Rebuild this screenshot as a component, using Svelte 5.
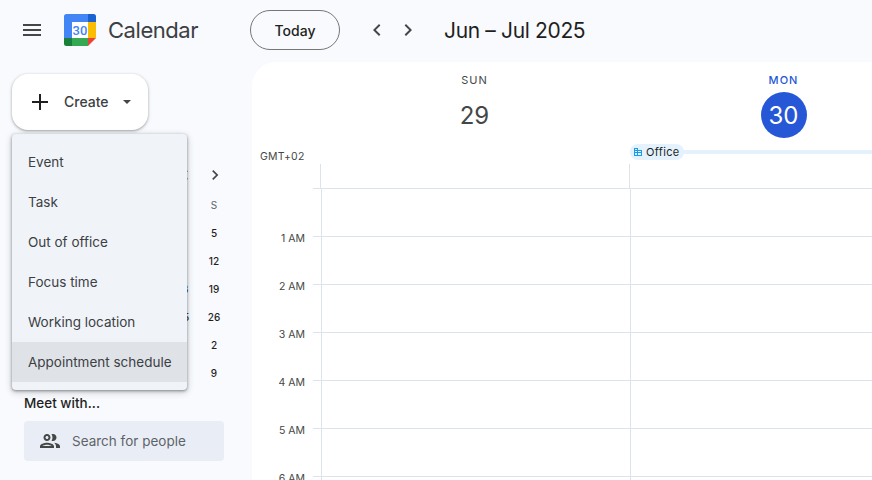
<script lang="ts">
  const menuItems = ['Event', 'Task', 'Out of office', 'Focus time', 'Working location', 'Appointment schedule'];
  const hours = ['1 AM', '2 AM', '3 AM', '4 AM', '5 AM', '6 AM'];
  const miniRows = [
    { mid: '', right: 'S', head: true },
    { mid: '', right: '5' },
    { mid: '', right: '12' },
    { mid: '18', right: '19' },
    { mid: '25', right: '26' },
    { mid: '', right: '2' },
    { mid: '', right: '9' }
  ];
</script>

<div class="page">
  <header class="topbar">
    <div class="brand">
      <button class="burger" aria-label="Main menu">
        <svg width="24" height="24" viewBox="0 0 24 24"><path fill="#444746" d="M3 18h18v-2H3v2zm0-5h18v-2H3v2zm0-7v2h18V6H3z"/></svg>
      </button>
      <svg class="logo" width="32" height="32" viewBox="0 0 32 32">
        <path fill="#4285f4" d="M2.500 0H24v8H8v16H0V2.500A2.500 2.500 0 0 1 2.500 0z"/>
        <path fill="#1a62d2" d="M24 0h5.500A2.500 2.500 0 0 1 32 2.500V8h-8z"/>
        <path fill="#fbbc04" d="M24 8h8v16h-8z"/>
        <path fill="#34a853" d="M8 24h16v8H8z"/>
        <path fill="#188038" d="M0 24h8v8H2.500A2.500 2.500 0 0 1 0 29.500z"/>
        <path fill="#ea4335" d="M24 24h8l-8 8z"/>
        <path fill="#fff" d="M8 8h16v16H8z"/>
        <text x="16" y="20.500" text-anchor="middle" class="logo-num">30</text>
      </svg>
      <span class="app-name">Calendar</span>
    </div>
    <button class="today">Today</button>
    <div class="nav-arrows">
      <svg width="24" height="24" viewBox="0 0 24 24"><path fill="#444746" d="M15.400 7.400 14 6l-6 6 6 6 1.400-1.400L10.800 12z"/></svg>
      <svg width="24" height="24" viewBox="0 0 24 24"><path fill="#444746" d="M8.600 7.400 10 6l6 6-6 6-1.400-1.400L13.200 12z"/></svg>
    </div>
    <h1 class="range">Jun – Jul 2025</h1>
  </header>

  <div class="body">
    <aside class="side">
      <button class="create">
        <svg width="24" height="24" viewBox="0 0 24 24"><path fill="#1f1f1f" d="M20 13h-7v7h-2v-7H4v-2h7V4h2v7h7z"/></svg>
        <span>Create</span>
        <svg class="caret" width="8" height="4" viewBox="0 0 10 5"><path fill="#444746" d="M0 0h10L5 5z"/></svg>
      </button>

      <div class="mini">
        <div class="mini-nav">
          <svg width="20" height="20" viewBox="0 0 24 24"><path fill="#444746" d="M15.400 7.400 14 6l-6 6 6 6 1.400-1.400L10.800 12z"/></svg>
          <svg width="20" height="20" viewBox="0 0 24 24"><path fill="#444746" d="M8.600 7.400 10 6l6 6-6 6-1.400-1.400L13.200 12z"/></svg>
        </div>
        {#each miniRows as row}
          <div class="mini-row" class:head={row.head}>
            <span class="mini-mid">{row.mid}</span>
            <span class="mini-right">{row.right}</span>
          </div>
        {/each}
      </div>

      <div class="meet">Meet with...</div>
      <div class="search">
        <svg width="24" height="24" viewBox="0 0 24 24"><path fill="#444746" d="M9 13.750c-2.340 0-7 1.170-7 3.500V19h14v-1.750c0-2.330-4.660-3.500-7-3.500zM4.340 17c.84-.58 2.870-1.250 4.660-1.250s3.820.67 4.660 1.250H4.340zM9 12c1.930 0 3.500-1.570 3.500-3.500S10.930 5 9 5 5.500 6.570 5.500 8.500 7.070 12 9 12zm0-5c.83 0 1.500.67 1.500 1.500S9.830 10 9 10s-1.500-.67-1.500-1.500S8.170 7 9 7zm7.040 6.810c1.160.84 1.960 1.960 1.960 3.440V19h4v-1.750c0-2.020-3.500-3.170-5.960-3.440zM15 12c1.930 0 3.500-1.570 3.500-3.500S16.930 5 15 5c-.54 0-1.040.13-1.500.35.630.89 1 1.980 1 3.150s-.37 2.260-1 3.150c.46.220.96.350 1.500.350z"/></svg>
        <span>Search for people</span>
      </div>

      <ul class="menu">
        {#each menuItems as item, i}
          <li class:active={i === menuItems.length - 1}>{item}</li>
        {/each}
      </ul>
    </aside>

    <main class="panel">
      <div class="day-heads">
        <div class="gutter-head"><span class="gmt">GMT+02</span></div>
        <div class="day">
          <span class="dow">SUN</span>
          <span class="num">29</span>
        </div>
        <div class="day today-col">
          <span class="dow">MON</span>
          <span class="num">30</span>
        </div>
      </div>

      <div class="allday">
        <div class="allday-gutter"></div>
        <div class="allday-cell"></div>
        <div class="allday-cell"></div>
        <div class="office">
          <span class="chip">
            <svg width="10" height="10" viewBox="0 0 10 10"><path fill="#1a9be8" fill-rule="evenodd" d="M1 1h4v2h4v6H1zm1 1v1h2V2zm0 2v1h2V4zm0 2v1h2V6zm0 2h2V7H2zm3-4v1h3V4zm0 2v1h3V6zm0 1v1h3V7z"/></svg>
            Office
          </span>
          <span class="office-bar"></span>
        </div>
      </div>

      <div class="grid">
        <div class="labels">
          {#each hours as h}
            <div class="hour-label"><span>{h}</span></div>
          {/each}
        </div>
        <div class="cols">
          {#each hours as h}
            <div class="slot"></div>
          {/each}
          <div class="slot"></div>
        </div>
      </div>
    </main>
  </div>
</div>

<style>
  :global(body) {
    margin: 0;
    background: #f8fafd;
    overflow: hidden;
    font-family: Inter, Roboto, "Liberation Sans", sans-serif;
    color: #1f1f1f;
  }
  .page {
    width: 872px;
    height: 480px;
    overflow: hidden;
    display: flex;
    flex-direction: column;
  }
  button {
    font: inherit;
    background: none;
    border: 0;
    padding: 0;
    color: inherit;
  }

  .topbar {
    height: 62px;
    flex: none;
    display: flex;
    align-items: center;
    box-sizing: border-box;
    padding-bottom: 2px;
  }
  .brand {
    width: 250px;
    flex: none;
    display: flex;
    align-items: center;
    padding-left: 20px;
    box-sizing: border-box;
  }
  .burger {
    width: 24px;
    height: 24px;
    margin-right: 20px;
  }
  .logo {
    flex: none;
  }
  .logo-num {
    font-family: Roboto, sans-serif;
    font-size: 13px;
    font-weight: 500;
    fill: #4285f4;
  }
  .app-name {
    font-size: 22px;
    color: #3c4043;
    margin-left: 12px;
    letter-spacing: -0.45px;
  }
  .today {
    width: 90px;
    height: 40px;
    border: 1px solid #747775;
    border-radius: 20px;
    font-size: 14px;
    font-weight: 450;
    color: #1f1f1f;
    box-sizing: border-box;
  }
  .nav-arrows {
    display: flex;
    gap: 7px;
    margin-left: 25px;
  }
  .range {
    margin: 0 0 0 24px;
    font-size: 21px;
    font-weight: 400;
    color: #1f1f1f;
    letter-spacing: -0.35px;
  }

  .body {
    flex: 1;
    display: flex;
    min-height: 0;
  }
  .side {
    width: 252px;
    flex: none;
    position: relative;
    padding: 12px 0 0 12px;
    box-sizing: border-box;
  }
  .create {
    width: 136px;
    height: 56px;
    background: #fff;
    border-radius: 16px;
    box-shadow: 0 1px 2px rgba(60, 64, 67, 0.3), 0 1px 3px 1px rgba(60, 64, 67, 0.15);
    display: flex;
    align-items: center;
    padding-left: 16px;
    box-sizing: border-box;
    font-size: 14px;
    font-weight: 450;
    color: #3c4043;
  }
  .create span {
    margin-left: 12px;
    margin-top: -1px;
  }
  .caret {
    margin-left: 14px;
  }

  .mini {
    margin-top: 32px;
    width: 212px;
  }
  .mini-nav {
    height: 28px;
    display: flex;
    justify-content: flex-end;
    align-items: center;
    gap: 10px;
    margin-right: -1px;
    margin-top: -1px;
  }
  .mini-row {
    height: 28px;
    display: flex;
    justify-content: flex-end;
    align-items: center;
    font-size: 10px;
    font-weight: 500;
    color: #1f1f1f;
  }
  .mini-row.head {
    color: #5f6368;
    font-weight: 400;
    margin-top: 2px;
  }
  .mini-mid {
    width: 28px;
    text-align: center;
    margin-right: 7px;
  }
  .mini-right {
    width: 20px;
    text-align: center;
  }

  .meet {
    position: absolute;
    left: 24px;
    top: 333px;
    font-size: 13.500px;
    font-weight: 500;
    line-height: 16px;
    color: #1f1f1f;
  }
  .search {
    position: absolute;
    left: 24px;
    top: 359px;
    width: 200px;
    height: 40px;
    background: #e9eef6;
    border-radius: 4px;
    display: flex;
    align-items: center;
    padding-left: 14px;
    box-sizing: border-box;
    font-size: 13.500px;
    color: #5f6368;
  }
  .search span {
    margin-left: 10px;
  }

  .menu {
    position: absolute;
    left: 12px;
    top: 72px;
    width: 175px;
    margin: 0;
    padding: 8px 0;
    list-style: none;
    background: #f0f4f9;
    border-radius: 4px;
    box-shadow: 0 1px 3px rgba(60, 64, 67, 0.55), 0 2px 6px 1px rgba(60, 64, 67, 0.2);
  }
  .menu li {
    height: 40px;
    padding-left: 16px;
    box-sizing: border-box;
    display: flex;
    align-items: center;
    font-size: 13.500px;
    color: #3c4043;
  }
  .menu li.active {
    background: #dfe3e8;
  }

  .panel {
    flex: 1;
    background: #fff;
    border-radius: 24px 0 0 0;
    min-width: 0;
  }
  .day-heads {
    display: flex;
    height: 84px;
  }
  .gutter-head {
    width: 68px;
    flex: none;
    position: relative;
  }
  .gmt {
    position: absolute;
    left: 8px;
    top: 88px;
    font-size: 10.500px;
    color: #444746;
    letter-spacing: 0.2px;
  }
  .day {
    width: 309px;
    flex: none;
    display: flex;
    flex-direction: column;
    align-items: center;
    padding-top: 12px;
    box-sizing: border-box;
  }
  .dow {
    font-size: 11px;
    font-weight: 400;
    letter-spacing: 1px;
    color: #444746;
    line-height: 12px;
  }
  .num {
    margin-top: 6px;
    width: 46px;
    height: 46px;
    border-radius: 50%;
    display: flex;
    align-items: center;
    justify-content: center;
    font-size: 24px;
    color: #444746;
  }
  .today-col .dow {
    color: #2557d6;
    font-weight: 500;
  }
  .today-col .num {
    background: #2557d6;
    color: #fff;
  }

  .allday {
    height: 42px;
    display: flex;
    position: relative;
    padding-top: 18px;
    box-sizing: border-box;
  }
  .allday-gutter {
    width: 68px;
    flex: none;
  }
  .allday-cell {
    width: 309px;
    flex: none;
    border-left: 1px solid #dde3ea;
    box-sizing: border-box;
  }
  .office {
    position: absolute;
    left: 378px;
    top: -2px;
    right: 0;
    height: 16px;
    display: flex;
    align-items: center;
  }
  .chip {
    display: flex;
    align-items: center;
    gap: 3px;
    height: 16px;
    padding: 0 4px 0 3px;
    border-radius: 8px;
    background: #e3f2fd;
    font-size: 11px;
    letter-spacing: 0.35px;
    color: #1f1f1f;
    flex: none;
  }
  .office-bar {
    flex: 1;
    height: 4px;
    background: #e3f2fd;
    margin-left: -1px;
  }

  .grid {
    display: flex;
    border-top: 1px solid #dde3ea;
    margin-left: 61px;
  }
  .labels {
    width: 8px;
    flex: none;
    position: relative;
    padding-top: 47px;
  }
  .hour-label {
    height: 48px;
    position: relative;
  }
  .hour-label span {
    position: absolute;
    right: 16px;
    top: -3px;
    font-size: 10.500px;
    line-height: 12px;
    color: #444746;
    white-space: nowrap;
  }
  .cols {
    flex: 1;
    background-image: linear-gradient(90deg, #dde3ea 1px, transparent 1px);
    background-size: 309px 100%;
  }
  .slot {
    height: 47px;
    border-bottom: 1px solid #dde3ea;
    margin-left: -8px;
  }
</style>
